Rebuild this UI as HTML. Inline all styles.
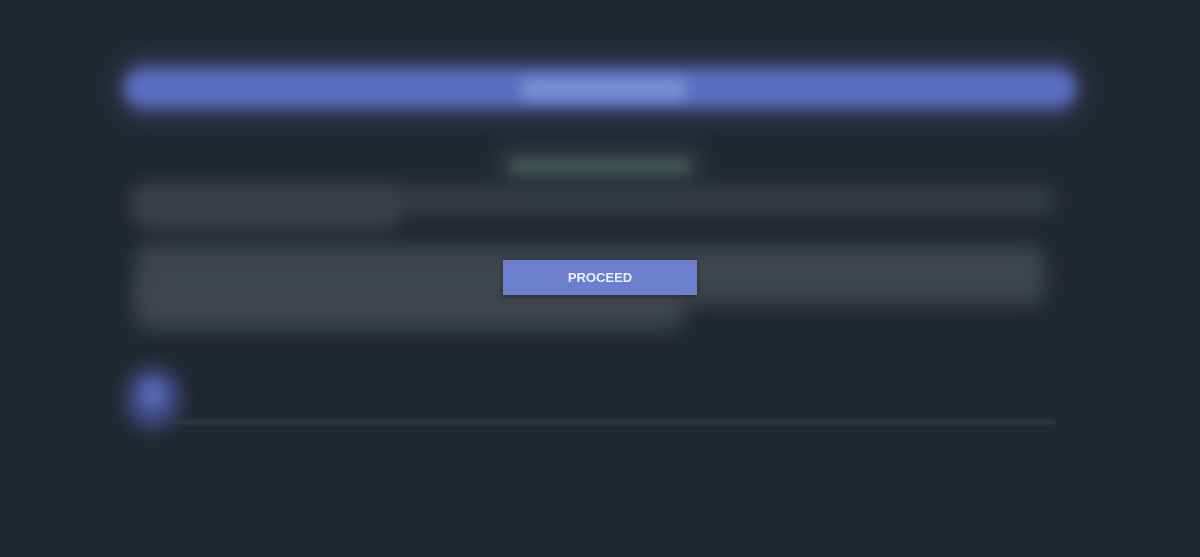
<!DOCTYPE html>
<html><head><style>
html,body{margin:0;width:1200px;height:557px;background:#222832;overflow:hidden;font-family:"Liberation Sans",sans-serif}
.b{position:absolute;filter:blur(9px)}
</style></head><body>
<div class="b" style="left:112px;top:52px;width:976px;height:72px;background:#2e354a;border-radius:36px;filter:blur(10px)"></div>
<div class="b" style="left:124px;top:68px;width:952px;height:40px;background:#5a6fc2;border-radius:20px;filter:blur(7px)"></div>
<div class="b" style="left:520px;top:78px;width:168px;height:22px;background:#7a8cd0;border-radius:11px;filter:blur(6px)"></div>
<div class="b" style="left:495px;top:145px;width:210px;height:40px;background:#2f363f;border-radius:14px"></div>
<div class="b" style="left:510px;top:158px;width:180px;height:18px;background:#3e5450;border-radius:9px;filter:blur(5px)"></div>
<div class="b" style="left:130px;top:185px;width:925px;height:30px;background:#353b44;border-radius:14px"></div>
<div class="b" style="left:135px;top:188px;width:265px;height:42px;background:#3a3f47;border-radius:14px"></div>
<div class="b" style="left:135px;top:245px;width:910px;height:60px;background:#3e444c;border-radius:14px"></div>
<div class="b" style="left:135px;top:280px;width:550px;height:50px;background:#3e444c;border-radius:14px"></div>
<div class="b" style="left:125px;top:366px;width:56px;height:64px;background:#3c4a80;border-radius:50%;filter:blur(8px)"></div>
<div class="b" style="left:140px;top:380px;width:26px;height:30px;background:#5567b0;border-radius:50%;filter:blur(6px)"></div>
<div class="b" style="left:175px;top:420px;width:880px;height:4px;background:#353b44;filter:blur(2px)"></div>
<div style="position:absolute;left:503px;top:260px;width:194px;height:35px;background:#6b7fcd;color:#eef0ff;font-size:13px;font-weight:bold;display:flex;align-items:center;justify-content:center;box-shadow:0 2px 4px rgba(0,0,0,.3)">PROCEED</div>
</body></html>
